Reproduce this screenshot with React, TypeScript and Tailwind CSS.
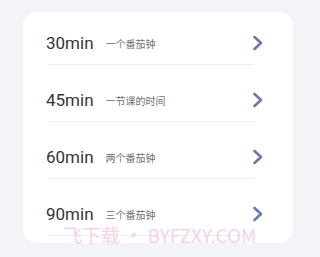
import React from "react";

const rows = [
  { t: "30min", s: "一个番茄钟" },
  { t: "45min", s: "一节课的时间" },
  { t: "60min", s: "两个番茄钟" },
  { t: "90min", s: "三个番茄钟" },
];

function Chevron() {
  return (
    <svg width="12" height="16" viewBox="0 0 12 16" fill="none">
      <path d="M2.5 2 L9 8 L2.5 14" stroke="#6c78a6" strokeWidth="2.6" strokeLinecap="round" strokeLinejoin="round" />
    </svg>
  );
}

export default function App() {
  return (
    <div className="w-[320px] h-[257px] bg-[#f3f4f8] pt-[12px] pl-[23px] overflow-hidden" style={{ fontFamily: 'Roboto, "Noto Sans CJK SC", sans-serif' }}>
      <div className="relative w-[270px] h-[231px] bg-white rounded-[14px]">
        {rows.map((r, i) => (
          <div key={i}>
            <div className={`${i === 0 ? "pt-[21px]" : "pt-[25px]"} pb-[11px] pl-[23px] pr-[29px] flex items-center`}>
              <div className="flex items-center h-[20px] flex-1">
                <span className="text-[17px] leading-[16px] text-[#363636]">{r.t}</span>
                <span className="ml-[12px] text-[10px] leading-[12px] text-[#707070] mt-[1px]" style={{ fontFamily: '"Noto Sans CJK SC", sans-serif' }}>{r.s}</span>
              </div>
              <Chevron />
            </div>
            <div className="ml-[25px] mr-[39px] h-px bg-[#efefef]" />
          </div>
        ))}
        <div className="absolute left-[40px] top-[215px] text-[19px] leading-[15px] text-[#f9d0ee] whitespace-nowrap" style={{ fontFamily: '"Noto Sans CJK SC", "Liberation Sans", sans-serif' }}>
          飞下载 • BYFZXY.COM
        </div>
      </div>
    </div>
  );
}
